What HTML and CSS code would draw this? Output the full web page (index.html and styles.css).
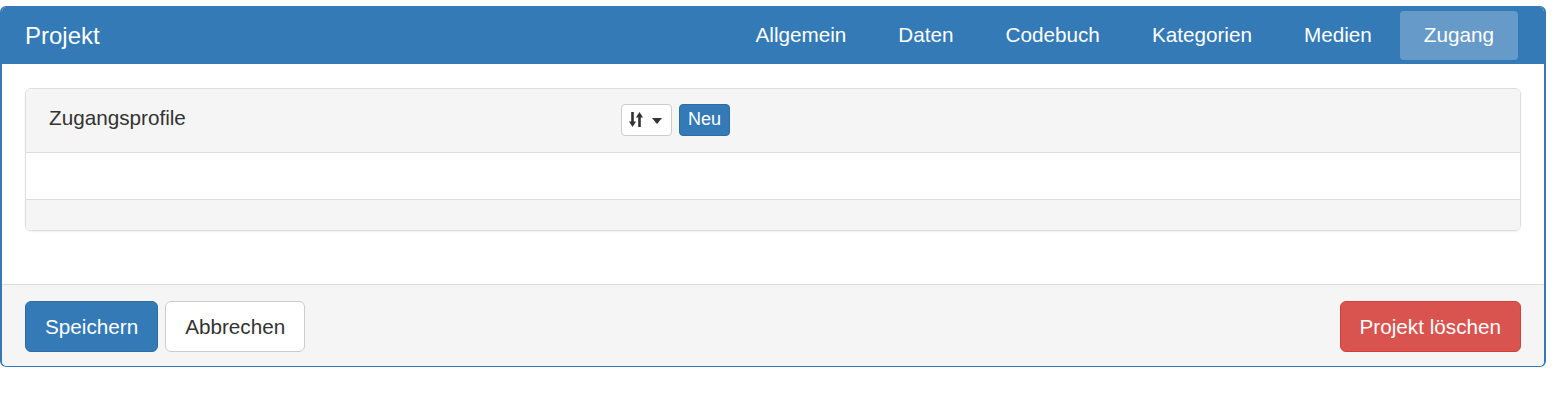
FILE: index.html
```html
<!DOCTYPE html>
<html lang="de">
<head>
<meta charset="utf-8">
<title>Projekt</title>
<link rel="stylesheet" href="styles.css">
</head>
<body>
<div class="panel">
  <div class="panel-heading">
    <h3 class="panel-title">Projekt</h3>
    <ul class="nav-pills">
      <li><a>Allgemein</a></li>
      <li><a>Daten</a></li>
      <li><a>Codebuch</a></li>
      <li><a>Kategorien</a></li>
      <li><a>Medien</a></li>
      <li class="active"><a>Zugang</a></li>
    </ul>
  </div>
  <div class="panel-body">
    <div class="subpanel">
      <div class="sub-heading">
        <div class="sub-label">Zugangsprofile</div>
        <div class="sub-tools">
          <button class="btn-xs btn-sort" type="button">
            <svg class="sort-icon" width="14" height="15" viewBox="0 0 14 15">
              <rect x="2.2" y="0" width="2.6" height="10.5" fill="#333"/>
              <polygon points="0,9.5 7,9.5 3.5,15" fill="#333"/>
              <polygon points="7,5.5 14,5.5 10.5,0" fill="#333"/>
              <rect x="9.2" y="4.5" width="2.6" height="10.5" fill="#333"/>
            </svg>
            <span class="caret"></span>
          </button>
          <button class="btn-xs btn-new" type="button">Neu</button>
        </div>
      </div>
      <div class="sub-body"></div>
      <div class="sub-footer"></div>
    </div>
  </div>
  <div class="panel-footer">
    <div class="footer-left">
      <button class="btn btn-primary" type="button">Speichern</button>
      <button class="btn btn-default" type="button">Abbrechen</button>
    </div>
    <button class="btn btn-danger" type="button">Projekt löschen</button>
  </div>
</div>
</body>
</html>
```

FILE: styles.css
```css
* { box-sizing: border-box; }

body {
  margin: 0;
  padding: 6px 9px 0 0;
  font-family: "Liberation Sans", Arial, sans-serif;
  font-size: 20.7px;
  color: #333;
  background: #fff;
}

.panel {
  width: 1546px;
  border-style: solid;
  border-color: #337ab7;
  border-width: 1px 2px 1px 2px;
  border-radius: 6px;
  background: #fff;
  overflow: hidden;
}

.panel-heading {
  height: 57px;
  background: #337ab7;
  display: flex;
  align-items: center;
  justify-content: space-between;
  padding: 0 26px 0 23px;
}

.panel-title {
  margin: 0;
  font-size: 24px;
  font-weight: normal;
  color: #fff;
  line-height: 1;
}

.nav-pills {
  list-style: none;
  margin: 0;
  padding: 0;
  display: flex;
  gap: 4px;
}

.nav-pills a {
  display: block;
  height: 49px;
  line-height: 48px;
  padding: 0 24px;
  color: #fff;
  border-radius: 4px;
  font-size: 20.7px;
}

.nav-pills .active a {
  background: #669bc9;
}

.panel-body {
  padding: 24px 23px 23px 23px;
}

.subpanel {
  border: 1px solid #ddd;
  border-radius: 6px;
  margin-bottom: 30px;
  box-shadow: 0 1px 2px rgba(0, 0, 0, 0.06);
  overflow: hidden;
}

.sub-heading {
  height: 64px;
  background: #f5f5f5;
  border-bottom: 1px solid #ddd;
  display: flex;
  align-items: center;
  padding: 0 0 2px 23px;
}

.sub-label {
  width: 572px;
  font-size: 20.7px;
  line-height: 24px;
  color: #333;
  margin-bottom: 3px;
}

.sub-tools {
  display: flex;
  gap: 7px;
  align-items: center;
}

.btn-xs {
  height: 32px;
  border-radius: 4px;
  font-family: inherit;
  padding: 0;
  margin: 0;
  display: flex;
  align-items: center;
  justify-content: center;
}

.btn-sort {
  width: 51px;
  background: #fff;
  border: 1px solid #ccc;
  justify-content: flex-start;
  padding-left: 7px;
}

.sort-icon {
  display: block;
}

.caret {
  display: block;
  width: 0;
  height: 0;
  margin-left: 9px;
  margin-top: 2px;
  border-top: 6px solid #333;
  border-left: 5px solid transparent;
  border-right: 5px solid transparent;
}

.btn-new {
  width: 51px;
  background: #337ab7;
  border: 1px solid #2e6da4;
  color: #fff;
  font-size: 18px;
  padding-bottom: 1px;
}

.sub-body {
  height: 47px;
  background: #fff;
  border-bottom: 1px solid #ddd;
}

.sub-footer {
  height: 30px;
  background: #f5f5f5;
}

.panel-footer {
  background: #f5f5f5;
  border-top: 1px solid #ddd;
  padding: 16px 23px 14px 23px;
  display: flex;
  justify-content: space-between;
  align-items: center;
}

.footer-left {
  display: flex;
  gap: 7px;
}

.btn {
  height: 51px;
  padding: 0 19px;
  border: 1px solid transparent;
  border-radius: 6px;
  font-family: inherit;
  font-size: 20.7px;
  line-height: 48px;
  margin: 0;
}

.btn-primary {
  background: #337ab7;
  border-color: #2e6da4;
  color: #fff;
}

.btn-default {
  background: #fff;
  border-color: #ccc;
  color: #333;
}

.btn-danger {
  background: #d9534f;
  border-color: #d43f3a;
  color: #fff;
}
```
